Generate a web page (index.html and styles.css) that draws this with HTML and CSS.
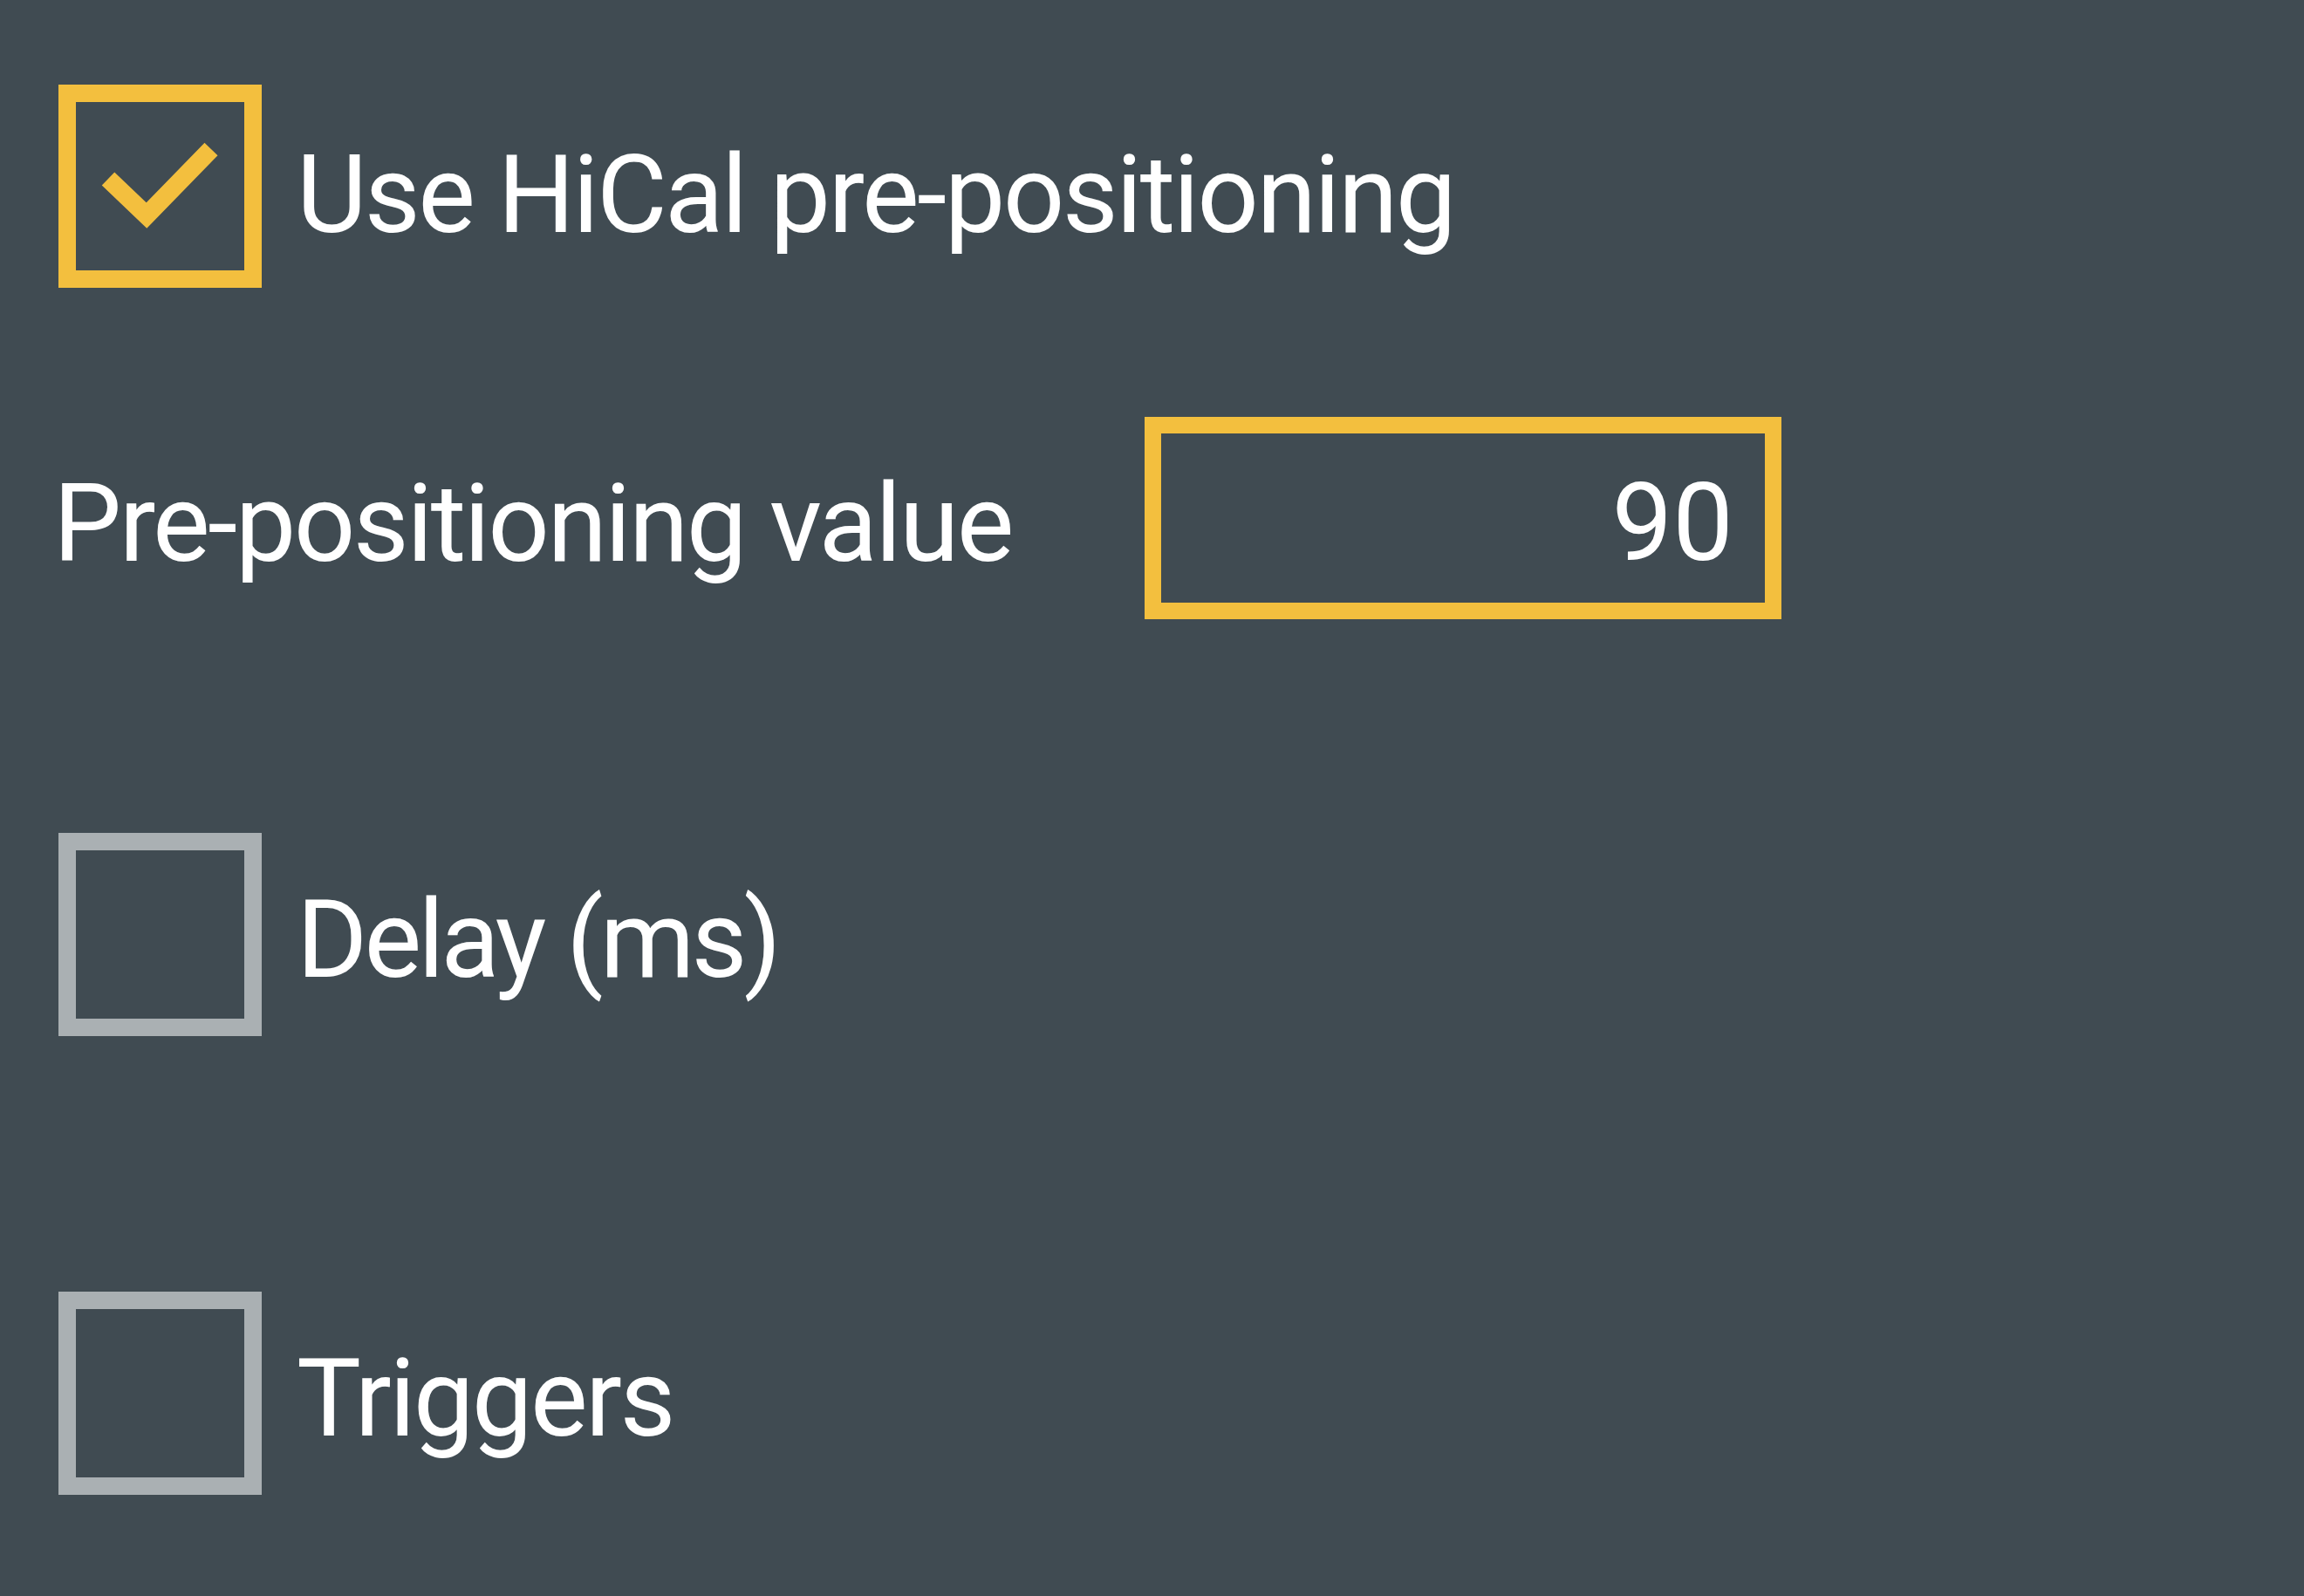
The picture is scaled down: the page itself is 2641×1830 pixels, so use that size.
FILE: index.html
```html
<!DOCTYPE html>
<html lang="en">
<head>
<meta charset="utf-8">
<title>Pre-positioning</title>
<link rel="stylesheet" href="styles.css">
</head>
<body>
<div class="panel">
  <div class="row row-first">
    <div class="box checked">
      <svg class="tick" viewBox="0 0 193 193" width="193" height="193" aria-hidden="true">
        <polyline points="37,88 81,130 155,54" fill="none" stroke="#f3bf3e" stroke-width="21" stroke-linecap="butt" stroke-linejoin="miter"/>
      </svg>
    </div>
    <span class="label label-first">Use HiCal pre-positioning</span>
  </div>
  <div class="row row-value">
    <span class="value-label">Pre-positioning value</span>
    <div class="input"><span class="input-text">90</span></div>
  </div>
  <div class="row row-delay">
    <div class="box"></div>
    <span class="label label-delay">Delay (ms)</span>
  </div>
  <div class="row row-triggers">
    <div class="box"></div>
    <span class="label">Triggers</span>
  </div>
</div>
</body>
</html>
```

FILE: styles.css
```css
html, body {
  margin: 0;
  padding: 0;
  background: #404b52;
  width: 2641px;
  height: 1830px;
  overflow: hidden;
}

.panel {
  display: flex;
  flex-direction: column;
  padding: 97px 0 0 67px;
  font-family: Roboto, "Noto Sans", sans-serif;
  font-size: 124px;
  letter-spacing: -2.6px;
  font-variant-ligatures: none;
  color: #ffffff;
}

.row {
  display: flex;
  align-items: center;
}

.row-value { margin-top: 148px; height: 232px; }
.row-delay { margin-top: 245px; }
.row-triggers { margin-top: 293px; }

.box {
  width: 233px;
  height: 233px;
  box-sizing: border-box;
  border: 20px solid #aab0b3;
  flex: 0 0 auto;
  display: flex;
}

.box.checked { border-color: #f3bf3e; }

.tick { display: block; }

.label {
  margin-left: 40px;
  padding-top: 12px;
  white-space: nowrap;
}

.label-first { padding-top: 20px; }
.label-delay { letter-spacing: -4px; }

.value-label {
  flex: 0 0 1251px;
  margin-left: -6px;
  padding-top: 12px;
  white-space: nowrap;
}

.input {
  width: 730px;
  height: 232px;
  box-sizing: border-box;
  border: 19px solid #f3bf3e;
  display: flex;
  align-items: center;
  justify-content: flex-end;
  padding-right: 36px;
}

.input-text { padding-top: 10px; letter-spacing: 0; }
```
